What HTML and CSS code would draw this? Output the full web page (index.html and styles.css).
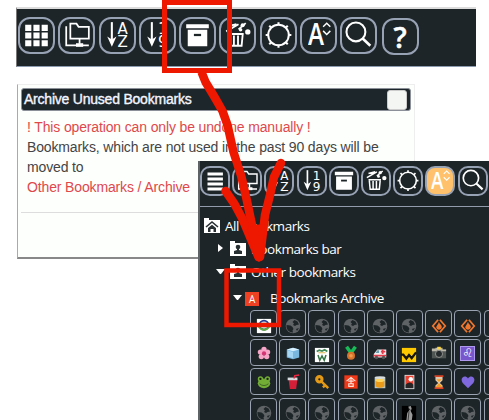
FILE: index.html
```html
<!DOCTYPE html>
<html lang="en">
<head>
<meta charset="utf-8">
<title>Archive Unused Bookmarks</title>
<link rel="stylesheet" href="styles.css">
</head>
<body>
<svg class="defs" aria-hidden="true">
  <symbol id="grid" viewBox="0 0 36 36"><path fill="#fff" d="M7 7.500h6v6H7zM15 7.500h6v6h-6zM23 7.500h6v6h-6zM7 15h6v6H7zM15 15h6v6h-6zM23 15h6v6h-6zM7 22.500h6v6H7zM15 22.500h6v6h-6zM23 22.500h6v6h-6z"/></symbol>
  <symbol id="menu" viewBox="0 0 36 36"><path stroke="#fff" stroke-width="3.600" d="M9 9.500h18.500M9 15.500h18.500M9 21.500h18.500M9 27.500h18.500"/></symbol>
  <symbol id="folders" viewBox="0 0 36 36"><path fill="none" stroke="#fff" stroke-width="1.700" d="M12 6.500h6l2 3h10V21H12zM8 9v18.500h22M21 21v5"/><path fill="#fff" d="M17.500 25.500h7v3.500h-7z"/></symbol>
  <symbol id="arrow" viewBox="0 0 36 36"><path fill="none" stroke="#fff" stroke-width="2" d="M12.500 5v20"/><path fill="#fff" d="M8 19l4.500 3 4.500-3-4.500 10z"/></symbol>
  <symbol id="archive" viewBox="0 0 36 36"><path fill="#fff" d="M7 7h22v4H7zM8.500 12.500h19v16h-19z"/><path stroke="#1d2528" stroke-width="2.200" d="M14.500 17.500h7"/></symbol>
  <symbol id="trash" viewBox="0 0 36 36"><path fill="none" stroke="#fff" stroke-width="1.800" d="M9 16.500h15M10 17.500l1 10.500h11l1-10.500M14.500 18v9M18.500 18v9M7 14l12-7M9 9l8-2M19 12l7-6"/><circle cx="23" cy="8" r="2" fill="#fff"/><circle cx="28" cy="14.500" r="2.600" fill="#fff"/><circle cx="21" cy="12.500" r="1.700" fill="#fff"/></symbol>
  <symbol id="gear" viewBox="0 0 36 36"><g fill="none" stroke="#fff"><circle cx="18" cy="17.500" r="10" stroke-width="1.900"/><path stroke-width="2" d="M18 5v3M18 27v3M5.500 17.500h3M27.500 17.500h3M9 8.500l2 2M27 8.500l-2 2M9 26.500l2-2M27 26.500l-2-2"/></g></symbol>
  <symbol id="updown" viewBox="0 0 36 36"><path fill="none" stroke="#fff" stroke-width="1.400" d="M22.500 9.500L26 6l3.500 3.500M22.500 13.500L26 17l3.500-3.500"/></symbol>
  <symbol id="search" viewBox="0 0 36 36"><g fill="none" stroke="#fff" stroke-width="2"><circle cx="15.500" cy="14.500" r="9.200"/><path stroke-width="2.600" d="M22 21l7.500 7"/></g></symbol>
  <symbol id="home" viewBox="0 0 16 15"><path fill="#fff" d="M0 0h5v2h11v13H0z"/><path fill="none" stroke="#283033" stroke-width="1.600" d="M2 9l6-5 6 5"/><path fill="#283033" d="M4 10l4-3.300 4 3.300v4H9.500v-3h-3v3H4z"/></symbol>
  <symbol id="person" viewBox="0 0 16 15"><path fill="#fff" d="M0 0h5v2h11v13H0z"/><circle cx="8" cy="6" r="2.300" fill="#283033"/><path fill="#283033" d="M7 7h2v2l3 1v3H4v-3l3-1z"/></symbol>
  <symbol id="globe" viewBox="0 0 16 16"><circle cx="8" cy="8" r="7.300" fill="#5f6366"/><path fill="#1d2528" d="M1.500 7l4 .5 2 1.500 1 2-1 1.500.5 2C4 14.500 1 11.500 1.500 7zM9.500 2l3 1.500 1.500 3-2.500.500L10 8 8 7l1-1.500L7.500 4zM11 11l3-1-2 3z"/></symbol>
  <symbol id="flame" viewBox="0 0 18 18"><path fill="none" stroke="#ee762d" stroke-width="2" d="M8 2L2 9l6 7M10 2l6 7-6 7"/><path fill="#ee762d" d="M9 4c0 3 4 4 3 7-1 3-5 3-6 0-.5-2 2-3 3-7z"/></symbol>
</svg>

<header class="bar">
  <div class="btn"><svg><use href="#grid"/></svg></div>
  <div class="btn"><svg><use href="#folders"/></svg></div>
  <div class="btn"><svg><use href="#arrow"/></svg><span class="sort">A<br>Z</span></div>
  <div class="btn"><svg><use href="#arrow"/></svg><span class="sort">1<br>9</span></div>
  <div class="btn"><svg><use href="#archive"/></svg></div>
  <div class="btn"><svg><use href="#trash"/></svg></div>
  <div class="btn"><svg><use href="#gear"/></svg></div>
  <div class="btn"><svg><use href="#updown"/></svg><span class="letter">A</span></div>
  <div class="btn"><svg><use href="#search"/></svg></div>
  <div class="btn help"><span class="question">?</span></div>
</header>

<section class="dialog">
  <h1>Archive Unused Bookmarks<span class="close"></span></h1>
  <div class="message">
    <p class="warn">! This operation can only be undone manually !</p>
    <p>Bookmarks, which are not used in the past 90 days will be moved to</p>
    <p class="warn">Other Bookmarks / Archive</p>
  </div>
</section>

<main class="panel">
  <div class="tools">
    <div class="btn"><svg><use href="#menu"/></svg></div>
    <div class="btn"><svg><use href="#folders"/></svg></div>
    <div class="btn"><svg><use href="#arrow"/></svg><span class="sort">A<br>Z</span></div>
    <div class="btn"><svg><use href="#arrow"/></svg><span class="sort">1<br>9</span></div>
    <div class="btn"><svg><use href="#archive"/></svg></div>
    <div class="btn"><svg><use href="#trash"/></svg></div>
    <div class="btn"><svg><use href="#gear"/></svg></div>
    <div class="btn active"><svg><use href="#updown"/></svg><span class="letter">A</span></div>
    <div class="btn"><svg><use href="#search"/></svg></div>
  </div>
  <div class="tree">
    <div class="row root"><svg class="folder"><use href="#home"/></svg><span>All Bookmarks</span></div>
    <div class="row child"><i class="closed"></i><svg class="folder"><use href="#person"/></svg><span>Bookmarks bar</span></div>
    <div class="row child"><i class="open"></i><svg class="folder"><use href="#person"/></svg><span>Other bookmarks</span></div>
    <div class="row leaf"><i class="open"></i><b class="a-icon">A</b><span>Bookmarks Archive</span></div>
  </div>
  <div class="cells">
    <div class="low"><svg viewBox="0 0 18 18"><path fill="#fff" d="M1 1h16v16H1z"/><circle cx="9" cy="8" r="5" fill="#d8e7e0" stroke="#263b91" stroke-width="2"/><path fill="none" stroke="#65a943" stroke-width="2" d="M3 10q6 7 12 0"/></svg></div>
    <div class="low"><svg><use href="#globe"/></svg></div><div class="low"><svg><use href="#globe"/></svg></div><div class="low"><svg><use href="#globe"/></svg></div><div class="low"><svg><use href="#globe"/></svg></div><div class="low"><svg><use href="#globe"/></svg></div>
    <div class="low"><svg><use href="#flame"/></svg></div><div class="low"><svg><use href="#flame"/></svg></div><div></div>

    <div><svg viewBox="0 0 18 18"><g fill="#f6a5c8"><circle cx="9" cy="5" r="3"/><circle cx="5" cy="8" r="3"/><circle cx="13" cy="8" r="3"/><circle cx="6" cy="13" r="3"/><circle cx="12" cy="13" r="3"/></g><circle cx="9" cy="9.500" r="2.400" fill="#d53474"/></svg></div>
    <div><svg viewBox="0 0 18 18"><path fill="#79b7df" d="M2 5l7-2 7 2v9l-7 2-7-2z"/><path fill="#d5f1ff" d="M2 5l7-2 7 2-7 2z"/><path fill="#a5d7f5" d="M3 6l6 2v7l-6-2z"/></svg></div>
    <div class="low"><svg viewBox="0 0 18 18"><path fill="#fff" d="M1 1h16v16H1z"/><path fill="none" stroke="#438957" stroke-width="2" d="M3 5l3-1.500 3 1 3-1.500 3 2"/><path stroke="#d5ac35" d="M5 6.500h8"/><path fill="none" stroke="#347344" stroke-width="1.700" d="M4.500 9l2 6L9 10l2.500 5 2-6"/></svg></div>
    <div><svg viewBox="0 0 18 18"><path fill="none" stroke="#18bb58" stroke-width="4" d="M4 2l5 7 5-7"/><circle cx="9" cy="12" r="4.500" fill="#d7742b"/><circle cx="9" cy="12" r="2" fill="#ef9a4c"/></svg></div>
    <div><svg viewBox="0 0 18 18"><path fill="#f0eeee" d="M2 10l4-5h10v9H2z"/><path fill="#679cad" d="M4 9l2-3h2v3z"/><path stroke="#e43b4b" stroke-width="2" d="M12 5v5M10 7.500h5M2 12h14"/><circle cx="5" cy="14" r="2" fill="#555"/><circle cx="13" cy="14" r="2" fill="#555"/></svg></div>
    <div class="low"><svg viewBox="0 0 18 18"><path fill="#ffc900" d="M1 1h16v16H1z"/><path fill="none" stroke="#17150b" stroke-width="2.600" d="M0 8.500h2.500L6 13l3-4 3 3.500 5-6.500"/></svg></div>
    <div><svg viewBox="0 0 18 18"><path fill="#4f5553" d="M1 5h16v10H1z"/><path fill="#bdb9aa" d="M1 4h4V3h8v2h4v2H1z"/><path fill="#ffd743" d="M7 2h4v3H7z"/><circle cx="9" cy="10" r="4" fill="#252b2c" stroke="#9b9c98"/></svg></div>
    <div><span class="leo">♌︎</span></div><div></div>

    <div><svg viewBox="0 0 18 18"><g fill="#72ad36"><ellipse cx="9" cy="10.500" rx="7" ry="5.500"/><circle cx="5" cy="5.500" r="3"/><circle cx="13" cy="5.500" r="3"/></g><path fill="none" stroke="#385c22" d="M4 11q5 4 10 0"/><circle cx="5" cy="5.500" r="1.300" fill="#17210f"/><circle cx="13" cy="5.500" r="1.300" fill="#17210f"/></svg></div>
    <div><svg viewBox="0 0 18 18"><path fill="#d51f38" d="M4 6h10l-1.500 11h-7z"/><path fill="#d6dce0" d="M3 4h11v3H3z"/><path fill="none" stroke="#e5263e" stroke-width="1.700" d="M10 5l1-3 5-1"/></svg></div>
    <div><svg viewBox="0 0 18 18"><circle cx="6" cy="6" r="3" fill="none" stroke="#e49a16" stroke-width="3.500"/><path fill="none" stroke="#e49a16" stroke-width="2.700" d="M8 8l8 8M12 13l-2 2"/></svg></div>
    <div><svg viewBox="0 0 18 18"><path fill="#ee3818" d="M1.500 1.500h15v15h-15z"/><path fill="none" stroke="#ffe1d8" stroke-width="1.300" d="M4 8l5-4 5 4M6 8h6M9 5v6M6.500 11h5v3h-5z"/></svg></div>
    <div><svg viewBox="0 0 18 18"><path fill="#b8c8ca" d="M3 4h12v12H3z"/><path fill="#e99a19" d="M4 8h10v6q-5 3-10 0z"/><ellipse cx="9" cy="7" rx="5" ry="2" fill="#ffd45e"/><ellipse cx="9" cy="4" rx="6" ry="1.500" fill="#d7dddc"/></svg></div>
    <div><svg viewBox="0 0 18 18"><path fill="#dedede" d="M4 1h11v16H4z"/><path fill="#e64130" d="M5 2h9v10H5z"/><path fill="#272525" d="M5 12q5-5 9 0v4H5z"/><circle cx="11" cy="6" r="2.500" fill="#fff"/></svg></div>
    <div><svg viewBox="0 0 18 18"><path fill="#dfc8ae" d="M5 3h8v4l-3 3 3 3v3H5v-3l3-3-3-3z"/><path fill="#f79d1e" d="M6 6h6l-3 3zM9 10l4 5H5z"/><path stroke="#d94324" stroke-width="2" d="M4 2.500h10M4 16h10"/></svg></div>
    <div><svg viewBox="0 0 18 18"><path fill="#8068df" d="M9 16L3 10C-1 4 6 0 9 5c3-5 10-1 6 5z"/></svg></div><div></div>

    <div class="low"><svg><use href="#globe"/></svg></div><div class="low"><svg><use href="#globe"/></svg></div><div class="low"><svg><use href="#globe"/></svg></div><div class="low"><svg><use href="#globe"/></svg></div><div class="low"><svg><use href="#globe"/></svg></div>
    <div class="low"><svg viewBox="0 0 18 18"><path d="M1 1h16v17H1z"/><path fill="#999" d="M8 2l3-1 1 3-1 3 2 4-1 7H6l1-9 3-4z"/><path stroke="#333" d="M9 7l-1 10M8 4l3 2"/></svg></div>
    <div class="low"><svg><use href="#globe"/></svg></div><div class="low"><svg><use href="#globe"/></svg></div><div></div>
  </div>
</main>

<svg class="marks" viewBox="0 0 489 420">
  <g fill="none" stroke="#ee1700">
    <path stroke-width="5" d="M164.500 2.500h65v68h-65z"/>
    <path stroke-width="4.500" d="M226.500 270.500h52.500v54.500h-52.500z"/>
    <g stroke-width="8.500" stroke-linejoin="round">
      <path d="M201.500 72l4 10 9 15 8 14 5 14 6 27 8 25 5 22 7 33"/>
      <path stroke-linecap="round" d="M225.500 191l9 13 8 15 16 38"/>
      <path stroke-linecap="round" d="M281 163l-7 14-4 18-5 20-5 42"/>
    </g>
    <path fill="#ee1700" stroke="none" d="M247 229l7-4 11-1-3 35-3 3-3-2z"/>
  </g>
</svg>
</body>
</html>
```

FILE: styles.css
```css
* { box-sizing: border-box; }
body { margin: 0; width: 489px; height: 420px; overflow: hidden; position: relative; background: #fff; font-family: "Liberation Sans", sans-serif; }
.defs { position: absolute; width: 0; height: 0; }
svg { display: block; }
.bar { display: flex; gap: 3.3px; width: 460px; height: 60px; margin: 7px 0 0 16px; padding: 8px 0 0 1px; background: #1d2528; border-top: 2px solid #dcdcdc; border-bottom: 1px solid #8d9bb0; border-left: 1px solid #777; }
.btn { position: relative; flex: none; width: 37px; height: 37px; border: 2px solid #98a2b5; border-radius: 12px; color: #fff; }
.btn svg { width: 37px; height: 37px; margin: -2px; }
.help { margin: 1px 0 0 1px; }
.sort { position: absolute; left: 16px; top: 4px; width: 12px; font: 15px/12.5px "DejaVu Sans", sans-serif; text-align: center; }
.letter { position: absolute; left: 6px; top: -1px; font: 600 31px/31px "Open Sans", sans-serif; transform: scaleX(.78); transform-origin: left; }
.question { display: block; text-align: center; font: 600 29px/33px "Open Sans", sans-serif; -webkit-text-stroke: .5px #fff; }
.dialog { width: 398px; height: 175px; margin: 17px 0 0 17px; padding: 3px 3px 0; border: 1px solid #aaa; border-right-color: #eee; border-top-color: #eee; border-bottom: 2px solid #888; background: #fdfffd; }
h1 { display: flex; align-items: center; justify-content: space-between; height: 23px; margin: 0; padding: 0 3px 2px 2px; border: 1px solid #8c9099; border-radius: 3px; background: #1d262b; color: #f4f6ff; font: 14px/20px "Liberation Sans", sans-serif; letter-spacing: -.22px; -webkit-text-stroke: .35px #f4f6ff; }
.close { width: 20px; height: 20px; border-radius: 3px; background: #f4f6f4; border: 1px solid #ccc; margin-top: 2px; }
.message { height: 102px; padding: 6px 0 0 6px; border-bottom: 1px solid #ddd; color: #444; font-size: 14px; line-height: 20px; letter-spacing: -.14px; }
p { margin: 0; width: 365px; }
.warn { color: #df494c; }
.panel { position: absolute; left: 198px; top: 161px; width: 291px; height: 259px; overflow: hidden; background: #1d2528; border-left: 2px solid #5e6466; color: #fff; }
.tools { display: flex; gap: 2.2px; height: 46px; padding-top: 5px; border-bottom: 1px solid #929bac; }
.tools .btn { width: 30px; height: 30px; border-radius: 10px; }
.tools svg { width: 30px; height: 30px; }
.tools .sort { left: 12px; top: 3px; font-size: 12px; line-height: 10.5px; }
.tools .letter { left: 4px; top: 0; font-size: 24px; line-height: 24px; }
.tools .active { background: #ffc16b; }
.tree { padding-top: 8px; font: 13.5px/23px "Open Sans", "Noto Sans", sans-serif; }
.row { display: flex; align-items: center; height: 23px; letter-spacing: -.42px; }
.root { padding-left: 4px; }
.root span { margin-left: 5px; }
.child { padding-left: 18px; }
.child span { margin-left: 5px; }
.leaf { height: 29px; padding-left: 33px; }
.leaf span { margin-left: 9px; }
.folder { width: 16px; height: 15px; margin-top: -3px; }
.closed { width: 5px; margin: -4px 7px 0 0; border: solid transparent; border-width: 4px 0 4px 5px; border-left-color: #fff; }
.open { width: 9px; border: solid transparent; border-width: 5px 4.5px 0; border-top-color: #fff; margin: -3px 5px 0 -2px; }
.leaf .open { margin: -2px 3px 0 0; }
.a-icon { width: 14px; height: 14px; margin-right: 2px; background: #ee4023; font: 10px/14px "Open Sans", sans-serif; text-align: center; }
.cells { display: grid; grid-template-columns: repeat(9, 27px); grid-auto-rows: 27px; gap: 2.2px; margin: -3px 0 0 50px; }
.cells div { display: flex; align-items: center; justify-content: center; border: 1px solid #98a2b0; border-radius: 4px; padding-top: 1px; }
.cells .low { padding-top: 4px; }
.cells svg { width: 16px; height: 16px; }
.leo { width: 15px; height: 15px; background: #7757cb; border: 1px solid #ad98ed; font: 12px/13px "DejaVu Sans", sans-serif; text-align: center; }
.marks { position: absolute; left: 0; top: 0; width: 489px; height: 420px; }
```
